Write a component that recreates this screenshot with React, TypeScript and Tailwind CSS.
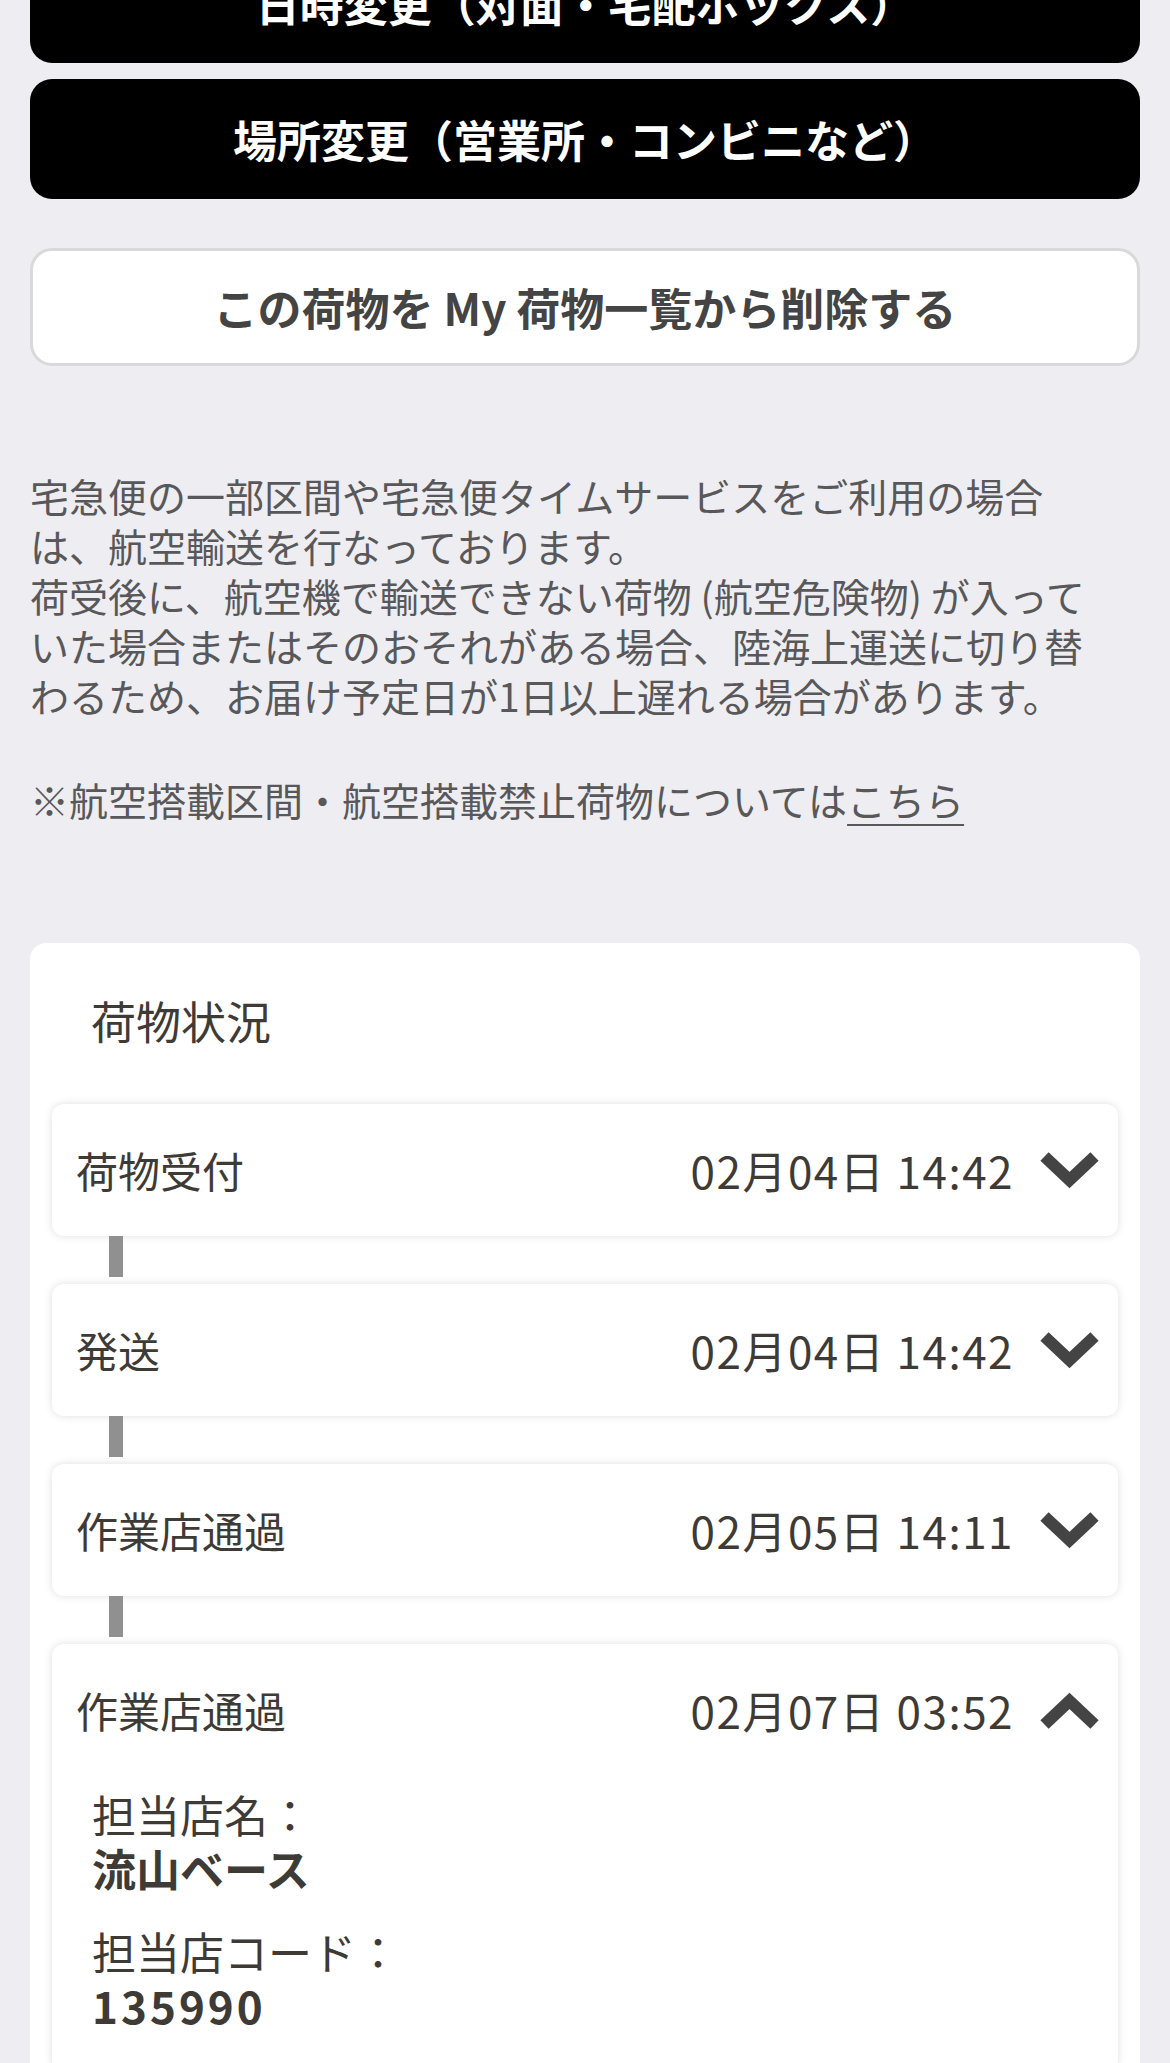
import React from 'react';

const font = { fontFamily: '"Noto Sans CJK JP", "Noto Sans", sans-serif' };

function Chevron({ up }: { up?: boolean }) {
  return (
    <svg width="59" height="37" viewBox="0 0 59 37" className={up ? 'rotate-180' : ''}>
      <polyline
        points="4.5,4.5 29.5,28 54.5,4.5"
        fill="none"
        stroke="#444444"
        strokeWidth="12"
        strokeLinecap="butt"
        strokeLinejoin="miter"
      />
    </svg>
  );
}

type Step = { label: string; date: string; open?: boolean };

const steps: Step[] = [
  { label: '荷物受付', date: '02月04日 14:42' },
  { label: '発送', date: '02月04日 14:42' },
  { label: '作業店通過', date: '02月05日 14:11' },
  { label: '作業店通過', date: '02月07日 03:52', open: true },
];

function StepCard({ step }: { step: Step }) {
  return (
    <div className="bg-white rounded-[12px] shadow-[0_0_8px_rgba(0,0,0,0.13)]">
      <div className="h-[132px] flex items-center justify-between pl-[24px] pr-[19px]">
        <span className="text-[42px] leading-none text-[#3e3b37]">{step.label}</span>
        <div className="flex items-center gap-[26px]">
          <span className="text-[44px] leading-none tracking-[1.5px] text-[#3e3b37]">{step.date}</span>
          <Chevron up={step.open} />
        </div>
      </div>
      {step.open && (
        <div className="pl-[40px] pt-[11px] pb-[40px] text-[44px] leading-[54px] text-[#3e3b37]">
          <div>担当店名：</div>
          <div className="font-bold">流山ベース</div>
          <div className="mt-[29px]">担当店コード：</div>
          <div className="font-bold tracking-[3px]">135990</div>
        </div>
      )}
    </div>
  );
}

export default function App() {
  return (
    <div className="min-h-screen bg-[#eeedf2] px-[30px] pb-[60px] overflow-hidden" style={font}>
      {/* Action buttons */}
      <button className="w-full h-[120px] -mt-[57px] rounded-[22px] bg-black text-white font-bold text-[44px] flex items-center justify-center">
        日時変更（対面・宅配ボックス）
      </button>
      <button className="w-full h-[120px] mt-[16px] rounded-[22px] bg-black text-white font-bold text-[44px] flex items-center justify-center">
        場所変更（営業所・コンビニなど）
      </button>
      <button className="w-full h-[118px] mt-[49px] rounded-[22px] bg-white border-[3px] border-[#d9d9dc] text-[#444444] font-bold text-[44px] flex items-center justify-center">
        この荷物を My 荷物一覧から削除する
      </button>

      {/* Notice */}
      <p className="mt-[104px] w-[1080px] text-[39px] leading-[50px] text-[#58585a]">
        宅急便の一部区間や宅急便タイムサービスをご利用の場合は、航空輸送を行なっております。
        <br />
        荷受後に、航空機で輸送できない荷物 (航空危険物) が入っていた場合またはそのおそれがある場合、陸海上運送に切り替わるため、お届け予定日が1日以上遅れる場合があります。
      </p>
      <p className="mt-[54px] text-[39px] leading-[50px] text-[#58585a]">
        ※航空搭載区間・航空搭載禁止荷物については
        <a className="underline decoration-[2px] underline-offset-[8px]">こちら</a>
      </p>

      {/* Status card */}
      <div className="mt-[119px] bg-white rounded-[16px] px-[22px] pt-[48px] pb-[40px]">
        <h2 className="ml-[39px] text-[45px] leading-[60px] text-[#3e3b37]">荷物状況</h2>
        <div className="mt-[53px]">
          {steps.map((s, i) => (
            <div key={i}>
              {i > 0 && (
                <div className="h-[48px]">
                  <div className="ml-[57px] w-[14px] h-[41px] bg-[#909090]" />
                </div>
              )}
              <StepCard step={s} />
            </div>
          ))}
        </div>
      </div>
    </div>
  );
}
